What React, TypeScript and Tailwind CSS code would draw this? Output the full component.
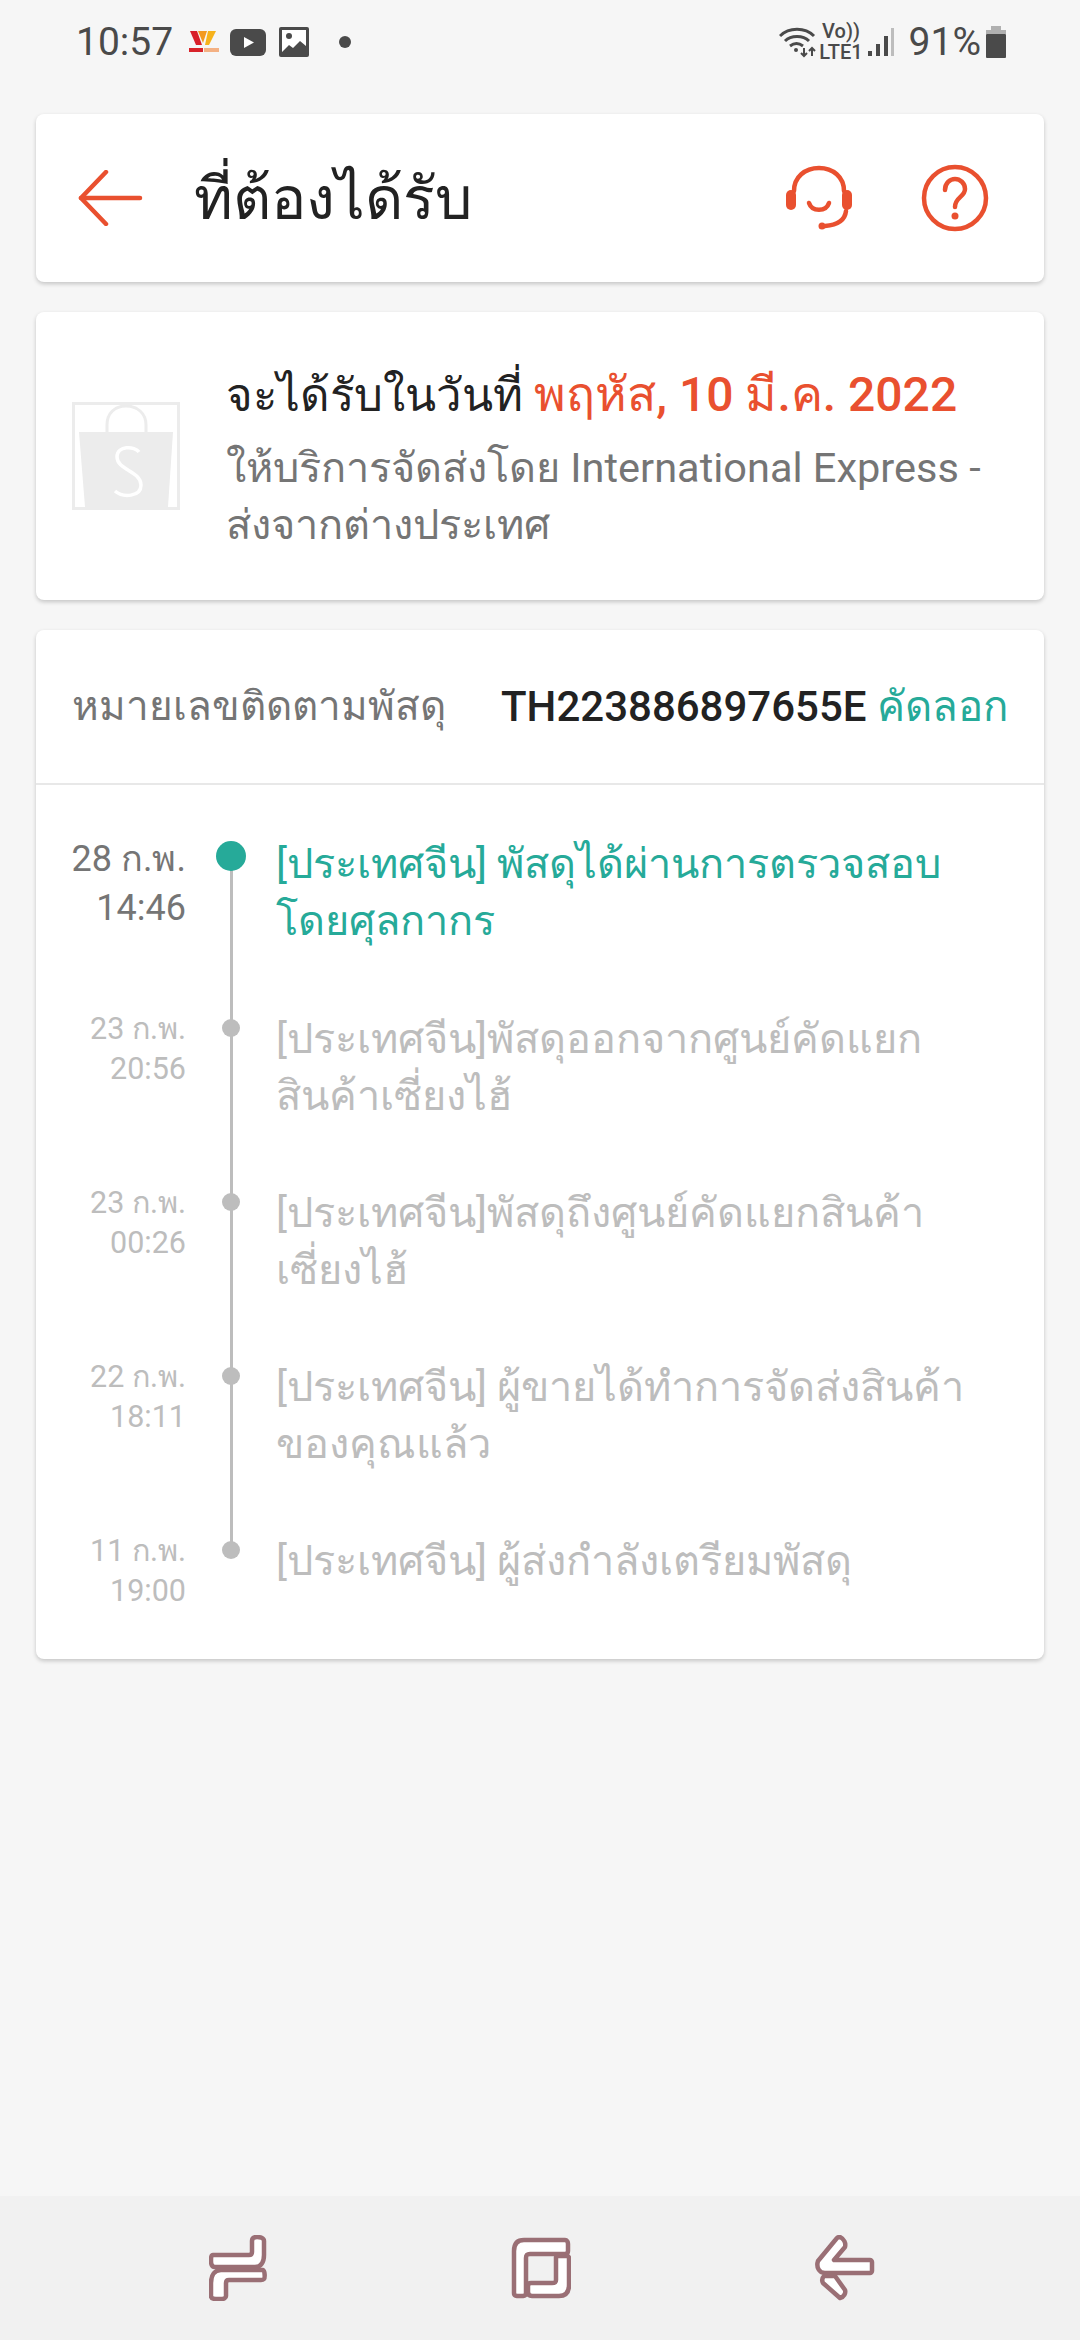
const thai = "font-['Roboto','Noto_Sans','Noto_Sans_CJK_SC',sans-serif]";

const EVENTS = [
  { date: "28 ก.พ.", time: "14:46", lines: ["[ประเทศจีน] พัสดุได้ผ่านการตรวจสอบ", "โดยศุลกากร"], active: true },
  { date: "23 ก.พ.", time: "20:56", lines: ["[ประเทศจีน]พัสดุออกจากศูนย์คัดแยก", "สินค้าเซี่ยงไฮ้"] },
  { date: "23 ก.พ.", time: "00:26", lines: ["[ประเทศจีน]พัสดุถึงศูนย์คัดแยกสินค้า", "เซี่ยงไฮ้"] },
  { date: "22 ก.พ.", time: "18:11", lines: ["[ประเทศจีน] ผู้ขายได้ทำการจัดส่งสินค้า", "ของคุณแล้ว"] },
  { date: "11 ก.พ.", time: "19:00", lines: ["[ประเทศจีน] ผู้ส่งกำลังเตรียมพัสดุ"], last: true },
];

function StatusBar() {
  return (
    <div className="flex h-[76px] items-center justify-between pl-[76px] pr-[74px] pt-[8px] text-[#4a4a4a]">
      <div className="flex items-center">
        <span className="text-[39px] leading-none">10:57</span>
        <svg width="30" height="24" viewBox="0 0 30 24" className="ml-[16px]">
          <path d="M1 1h7l5 14H7z" fill="#d8202a" />
          <path d="M9 1h9l-4 12z" fill="#f39a1f" />
          <path d="M19 1h8l-7 14h-4z" fill="#f6b21c" />
          <rect x="0" y="18" width="14" height="4" fill="#d8232a" />
          <rect x="15" y="18" width="15" height="4" fill="#f4b183" />
        </svg>
        <svg width="36" height="27" viewBox="0 0 36 27" className="ml-[11px]">
          <rect x="0" y="0" width="36" height="27" rx="6" fill="#4a4a4a" />
          <path d="M14 8l10 5.5-10 5.5z" fill="#fff" />
        </svg>
        <svg width="30" height="30" viewBox="0 0 30 30" className="ml-[13px]">
          <rect width="30" height="30" rx="2" fill="#4a4a4a" />
          <rect x="3" y="3" width="24" height="24" fill="#fff" />
          <circle cx="10" cy="9" r="3" fill="#4a4a4a" />
          <path d="M3 25l7-7 4 3 7-7 6 5v8H3z" fill="#4a4a4a" />
        </svg>
        <span className="ml-[30px] h-[12px] w-[12px] rounded-full bg-[#4a4a4a]" />
      </div>
      <div className="flex items-center">
        <svg width="37" height="32" viewBox="0 0 37 32" fill="none" stroke="#4a4a4a" strokeWidth="3">
          <path d="M1 10c9-9 25-9 34 0" />
          <path d="M6 15c6-6 18-6 24 0" />
          <path d="M11 20c4-3 9-3 13 0" />
          <circle cx="17" cy="24" r="2" fill="#4a4a4a" stroke="none" />
          <path d="M25 22v8M22 27l3 3 3-3" strokeWidth="2" />
          <path d="M33 30v-8M30 25l3-3 3 3" strokeWidth="2" />
        </svg>
        <div className="ml-[3px] flex flex-col items-center text-[20px] font-medium leading-[21px]">
          <span>Vo))</span>
          <span>LTE1</span>
        </div>
        <svg width="28" height="30" viewBox="0 0 28 30" className="ml-[4px]">
          <rect x="1" y="24" width="4" height="5" fill="#4a4a4a" />
          <rect x="9" y="17" width="4" height="12" fill="#4a4a4a" />
          <rect x="17" y="9" width="4" height="20" fill="#4a4a4a" />
          <rect x="24" y="1" width="3" height="28" fill="#bdbdbd" />
        </svg>
        <span className="ml-[14px] text-[39px] leading-none">91%</span>
        <svg width="20" height="32" viewBox="0 0 20 32" className="ml-[5px]">
          <rect x="5" y="0" width="10" height="4" fill="#b0b0b0" />
          <rect x="0" y="4" width="20" height="4" fill="#b0b0b0" />
          <rect x="0" y="8" width="20" height="24" rx="1" fill="#4a4a4a" />
        </svg>
      </div>
    </div>
  );
}

function Header() {
  return (
    <div className="mx-[36px] mt-[38px] flex h-[168px] items-center rounded-[8px] bg-white pl-[42px] pr-[55px] shadow-[0_2px_4px_rgba(0,0,0,0.2)]">
      <svg width="66" height="56" viewBox="0 0 66 56" fill="none" stroke="#e9502f" strokeWidth="4.5" strokeLinecap="round" strokeLinejoin="round">
        <path d="M62 28H3" />
        <path d="M28 2L3 28l25 26" />
      </svg>
      <h1 className="ml-[50px] flex-1 text-[59px] font-normal leading-none text-[#222222]">ที่ต้องได้รับ</h1>
      <svg width="68" height="66" viewBox="0 0 68 66" fill="none" stroke="#e9502f" strokeWidth="4.5" strokeLinecap="round">
        <path d="M9 26C9 12 20 3 34 3s25 9 25 23" />
        <rect x="1" y="25" width="10" height="20" rx="5" fill="#e9502f" stroke="none" />
        <rect x="57" y="25" width="10" height="20" rx="5" fill="#e9502f" stroke="none" />
        <path d="M24 38c3 9 17 9 20 0" />
        <path d="M61 46c-1 9-9 14-21 15" />
        <circle cx="37" cy="61" r="3.5" fill="#e9502f" stroke="none" />
      </svg>
      <svg width="68" height="68" viewBox="0 0 68 68" fill="none" stroke="#e9502f" strokeWidth="4.5" strokeLinecap="round" className="ml-[68px]">
        <circle cx="34" cy="34" r="31" />
        <path d="M24 26c0-7 5-11 10-11s10 4 10 10c0 8-10 8-10 18" />
        <circle cx="34" cy="52" r="3.5" fill="#e9502f" stroke="none" />
      </svg>
    </div>
  );
}

function Delivery() {
  return (
    <div className="mx-[36px] mt-[30px] flex h-[288px] items-center rounded-[8px] bg-white pl-[36px] shadow-[0_2px_4px_rgba(0,0,0,0.2)]">
      <div className="flex h-[108px] w-[108px] shrink-0 items-start justify-center border-[3px] border-[#ececec]">
        <svg width="98" height="102" viewBox="0 0 98 102">
          <path d="M30 28V20C30 8 38 1 49 1s20 7 20 19v8" fill="none" stroke="#ececec" strokeWidth="3" />
          <path d="M2 27h94l-5 75H8z" fill="#ececec" />
          <path d="M62 47c-4-6-22-7-22 5 0 13 24 14 24 28 0 12-18 13-26 6" fill="none" stroke="#fff" strokeWidth="3.5" />
        </svg>
      </div>
      <div className="ml-[46px] min-w-0 flex-1 pt-[6px]">
        <div className="h-[74px] whitespace-nowrap text-[45.5px] leading-[60px] text-[#222222]">
          จะได้รับในวันที่ <span className="text-[48px] font-medium text-[#e9502f]">พฤหัส, 10 มี.ค. 2022</span>
        </div>
        <div className="text-[41.5px] leading-[57px] text-[#757575]">
          <div className="whitespace-nowrap">ให้บริการจัดส่งโดย International Express -</div>
          <div>ส่งจากต่างประเทศ</div>
        </div>
      </div>
    </div>
  );
}

function TimelineRow({ e }: { e: (typeof EVENTS)[number] }) {
  return (
    <div className={`flex ${e.last ? "" : e.active ? "h-[172px]" : "h-[174px]"}`}>
      <div
        className={`w-[150px] shrink-0 pl-[4px] text-right ${
          e.active ? "text-[36px] leading-[49px] text-[#757575]" : "pt-[2px] text-[30.5px] leading-[40px] text-[#bdbdbd]"
        }`}
      >
        <div>{e.date}</div>
        <div>{e.time}</div>
      </div>
      <div className="relative w-[90px] shrink-0">
        <div
          className={`absolute left-[44px] w-[3px] bg-[#bdbdbd] ${e.last ? "top-0 h-[20px]" : e.active ? "bottom-0 top-[16px]" : "bottom-0 top-0"}`}
        />
        {e.active ? (
          <div className="absolute left-[30px] top-[6px] h-[30px] w-[30px] rounded-full bg-[#26aa99]" />
        ) : (
          <div className="absolute left-[36px] top-[12px] h-[18px] w-[18px] rounded-full bg-[#bdbdbd]" />
        )}
      </div>
      <div className={`min-w-0 flex-1 text-[41.5px] leading-[57px] ${e.active ? "text-[#26aa99]" : "pt-[3px] text-[#bdbdbd]"}`}>
        {e.lines.map((l) => (
          <div key={l} className="whitespace-nowrap">{l}</div>
        ))}
      </div>
    </div>
  );
}

function Tracking() {
  return (
    <div className="mx-[36px] mt-[30px] rounded-[8px] bg-white pb-[48px] shadow-[0_2px_4px_rgba(0,0,0,0.2)]">
      <div className="flex h-[155px] items-center justify-between border-b-[2px] border-[#e8e8e8] pl-[36px] pr-[36px]">
        <span className="text-[40.5px] text-[#757575]">หมายเลขติดตามพัสดุ</span>
        <span className="text-[42px]">
          <span className="font-medium text-[#222222]">TH223886897655E</span> <span className="text-[#26aa99]">คัดลอก</span>
        </span>
      </div>
      <div className="pt-[50px]">
        {EVENTS.map((e) => (
          <TimelineRow key={e.date + e.time} e={e} />
        ))}
      </div>
    </div>
  );
}

function NavBar() {
  const color = "#9a6f75";
  return (
    <div className="mt-auto flex h-[144px] items-center justify-between bg-[#f1f1f1] pl-[209px] pr-[205px]">
      <svg width="58" height="66" viewBox="0 0 58 66" fill="none" stroke={color} strokeWidth="4.5" strokeLinejoin="round">
        <path d="M4 20h36c2 0 3-1 3-3V6c0-3 2-4 5-4s7 1 7 4v14c0 7-3 12-9 12H6c-3 0-4-3-4-6s0-6 2-6z" fill="#fff" />
        <path d="M54 35c2 1 2 8 1 9-1 1-2 1-3 1H20c-2 0-3 1-3 3v13c0 2-2 3-4 3H7c-3 0-5-1-5-3V48c0-8 4-13 10-13z" fill="#fff" />
      </svg>
      <svg width="60" height="62" viewBox="0 0 60 62" fill="none" stroke={color} strokeWidth="4.5" strokeLinejoin="round">
        <path d="M3 56V14C3 6 7 3 13 3h41c2 0 3 2 3 4v7c0 2-1 3-3 3H19c-3 0-4 1-4 4v35c0 3-2 3-6 3s-6 0-6-3z" fill="#fff" />
        <path d="M46 19h10c1 0 2 1 2 2v27c0 8-4 11-10 11H21c-3 0-4-2-4-4v-6c0-2 1-3 3-3h21c3 0 4-1 4-3V20z" fill="#fff" />
      </svg>
      <svg width="60" height="66" viewBox="0 0 60 66" fill="none" stroke={color} strokeWidth="4.5" strokeLinejoin="round">
        <path d="M25 2c4 2 6 6 5 10L19 25h36c1 0 2 1 2 2v9c0 1-1 2-2 2H10c-6 0-9-6-7-12L22 3c1-1 2-1 3-1z" fill="#fff" />
        <path d="M9 41h11l10 14c1 3-1 7-5 8L8 48c-1-2-1-5 1-7z" fill="#fff" />
      </svg>
    </div>
  );
}

export default function App() {
  return (
    <div className={`flex h-[2340px] w-[1080px] flex-col overflow-hidden bg-[#f6f6f6] ${thai}`}>
      <StatusBar />
      <Header />
      <Delivery />
      <Tracking />
      <NavBar />
    </div>
  );
}
